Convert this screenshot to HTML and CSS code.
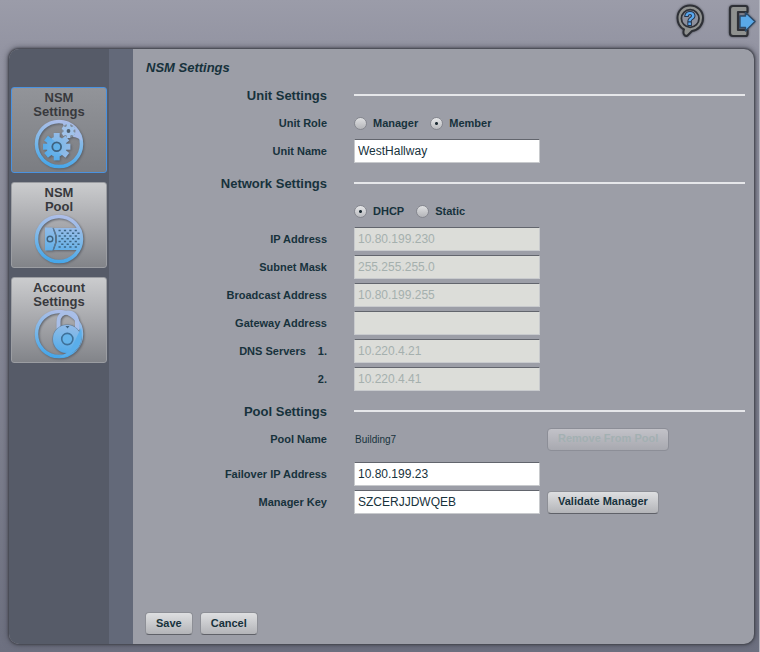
FILE: index.html
```html
<!DOCTYPE html>
<html lang="en">
<head>
<meta charset="utf-8">
<title>NSM Settings</title>
<link rel="stylesheet" href="styles.css">
</head>
<body>
<header class="topbar">
  <button class="icon-button" type="button" aria-label="Help">
    <svg width="32" height="36" viewBox="0 0 32 36">
      <path d="M16 2.500C8.800 2.500 3.500 8 3.500 15c0 5.500 2.800 9.500 6.500 11.500-1.500 4 .5 7.500 3.500 6l4.500-4.500C24.500 27 29 22 29 15 29 8 23.500 2.500 16 2.500z" fill="#8f918f" stroke="#2e3036" stroke-width="2" stroke-linejoin="round"/>
      <circle cx="16.200" cy="15.500" r="8.800" fill="#8d909c" stroke="#2e3036" stroke-width="1.800"/>
      <text class="help-mark" x="16" y="22" text-anchor="middle">?</text>
    </svg>
  </button>
  <button class="icon-button" type="button" aria-label="Log out">
    <svg width="32" height="36" viewBox="0 2 32 36">
      <path d="M7 5h12.500a2 2 0 0 1 2 2v4H12v18h9.500v4a2 2 0 0 1-2 2H7a3 3 0 0 1-3-3V8a3 3 0 0 1 3-3z" fill="#8f918f" stroke="#2e3036" stroke-width="2.200" stroke-linejoin="round"/>
      <path d="M14 15h5.500v-3.500l9.500 9-9.500 9.500V26.500H14z" fill="#5aa9e8" stroke="#2d4a68" stroke-width="1.400" stroke-linejoin="round"/>
    </svg>
  </button>
</header>

<div class="panel">
  <nav class="sidebar">
    <button class="tile tile-active" type="button">
      <span>NSM<br>Settings</span>
      <svg class="tile-icon" viewBox="0 0 50 50">
        <defs>
          <linearGradient id="blue" gradientUnits="userSpaceOnUse" x1="30" y1="0" x2="22" y2="50">
            <stop offset="0" stop-color="#b3bfe8"/>
            <stop offset=".5" stop-color="#7db8e8"/>
            <stop offset="1" stop-color="#42a5ea"/>
          </linearGradient>
        </defs>
        <circle cx="25" cy="25" r="22.500" fill="none" stroke="url(#blue)" stroke-width="3.500"/>
        <path d="M28 2A23.500 23.500 0 0 1 48.500 22q-6-4-9-4L30 8z" fill="#a6bce8"/>
        <circle cx="34.500" cy="12" r="7" fill="#808c9c"/>
        <g fill="#a0c2ea">
          <circle cx="34.500" cy="12" r="5"/>
          <path d="M32.800 5h3.400v14h-3.400z"/>
          <path d="M32.800 5h3.400v14h-3.400z" transform="rotate(60 34.500 12)"/>
          <path d="M32.800 5h3.400v14h-3.400z" transform="rotate(120 34.500 12)"/>
        </g>
        <circle cx="34.500" cy="12" r="1.900" fill="#50606f"/>
        <g fill="url(#blue)">
          <circle cx="22.700" cy="27.700" r="10"/>
          <path d="M19.700 14h6v27.400h-6z"/>
          <path d="M19.700 14h6v27.400h-6z" transform="rotate(51 22.700 27.700)"/>
          <path d="M19.700 14h6v27.400h-6z" transform="rotate(90 22.700 27.700)"/>
          <path d="M19.700 14h6v27.400h-6z" transform="rotate(129 22.700 27.700)"/>
        </g>
        <circle cx="22.700" cy="27.700" r="4.400" fill="#62b1e8" stroke="#3f627f" stroke-width="1.800"/>
      </svg>
    </button>
    <button class="tile" type="button">
      <span>NSM<br>Pool</span>
      <svg class="tile-icon" viewBox="0 0 50 50">
        <circle cx="25" cy="25" r="22.500" fill="none" stroke="url(#blue)" stroke-width="3.500"/>
        <path d="M11 13.500h7.500l2.500 8v7l-2.500 8H11z" fill="url(#blue)"/>
        <path d="M20 14h24.500q4 11 0 22H20l3-8v-6z" fill="url(#blue)"/>
        <path d="M19 14l3 8v6l-3 8.500" fill="none" stroke="#4d7ba0"/>
        <g fill="none" stroke="#3c6584" stroke-width="1.600">
          <path d="M24.500 16.500H45M24.500 22H45M24.500 27.500H45M24.500 33H45" stroke-dasharray="2.200 3.200"/>
          <path d="M27.200 19.250H46M27.200 24.750H46M27.200 30.250H46" stroke-dasharray="2.200 3.200"/>
        </g>
        <circle cx="16" cy="25" r="2.800" fill="#7fb9e8" stroke="#3f627f" stroke-width="1.400"/>
      </svg>
    </button>
    <button class="tile" type="button">
      <span>Account<br>Settings</span>
      <svg class="tile-icon" viewBox="0 0 50 50">
        <circle cx="25" cy="25" r="22.500" fill="none" stroke="url(#blue)" stroke-width="3.500"/>
        <path d="M24.500 20v-7c0-6 4-9.500 9.500-9.500s9 4 9 9.500v8" fill="none" stroke="#a9bfe8" stroke-width="4"/>
        <circle cx="33" cy="30" r="14.600" fill="#64809c"/>
        <circle cx="33" cy="30" r="14" fill="url(#blue)"/>
        <path d="M47 19A23.500 23.500 0 0 1 25 48.500L36 42z" fill="#5aaeea"/>
        <circle cx="33.300" cy="30" r="5.600" fill="#66b4ea" stroke="#3f7199" stroke-width="1.600"/>
        <path d="M31.500 17h4L33.500 19.500z" fill="#3f627f"/>
      </svg>
    </button>
  </nav>

  <form class="content">
    <h1>NSM Settings</h1>

    <section>
      <div class="row">
        <h2>Unit Settings</h2>
        <hr>
      </div>
      <div class="row" role="radiogroup" aria-labelledby="role">
        <span class="label" id="role">Unit Role</span>
        <div class="choices">
          <label><input type="radio" name="role">Manager</label>
          <label><input type="radio" name="role" checked>Member</label>
        </div>
      </div>
      <div class="row">
        <label class="label" for="unit">Unit Name</label>
        <input class="field" id="unit" type="text" value="WestHallway">
      </div>
    </section>

    <section>
      <div class="row">
        <h2>Network Settings</h2>
        <hr>
      </div>
      <div class="row">
        <div class="choices">
          <label><input type="radio" name="mode" checked>DHCP</label>
          <label><input type="radio" name="mode">Static</label>
        </div>
      </div>
      <div class="row">
        <label class="label" for="ip">IP Address</label>
        <input class="field" id="ip" type="text" value="10.80.199.230" disabled>
      </div>
      <div class="row">
        <label class="label" for="mask">Subnet Mask</label>
        <input class="field" id="mask" type="text" value="255.255.255.0" disabled>
      </div>
      <div class="row">
        <label class="label" for="broadcast">Broadcast Address</label>
        <input class="field" id="broadcast" type="text" value="10.80.199.255" disabled>
      </div>
      <div class="row">
        <label class="label" for="gateway">Gateway Address</label>
        <input class="field" id="gateway" type="text" disabled>
      </div>
      <div class="row">
        <label class="label label-numbered" for="dns1"><span>DNS Servers</span><span>1.</span></label>
        <input class="field" id="dns1" type="text" value="10.220.4.21" disabled>
      </div>
      <div class="row">
        <label class="label" for="dns2">2.</label>
        <input class="field" id="dns2" type="text" value="10.220.4.41" disabled>
      </div>
    </section>

    <section>
      <div class="row">
        <h2>Pool Settings</h2>
        <hr>
      </div>
      <div class="row row-pool">
        <span class="label">Pool Name</span>
        <output class="value">Building7</output>
        <button class="button" type="button" disabled>Remove From Pool</button>
      </div>
      <div class="row">
        <label class="label" for="failover">Failover IP Address</label>
        <input class="field" id="failover" type="text" value="10.80.199.23">
      </div>
      <div class="row">
        <label class="label" for="key">Manager Key</label>
        <input class="field" id="key" type="text" value="SZCERJJDWQEB">
        <button class="button" type="button">Validate Manager</button>
      </div>
    </section>

    <footer class="actions">
      <button class="button" type="submit">Save</button>
      <button class="button" type="button">Cancel</button>
    </footer>
  </form>
</div>
</body>
</html>
```

FILE: styles.css
```css
* {
  box-sizing: border-box;
}

body {
  display: flex;
  flex-direction: column;
  min-height: 100vh;
  margin: 0;
  padding: 0 5px 8px 9px;
  background: linear-gradient(#9b9ca9, #9394a2 50px, #858795 50%, #6d7080);
  border-right: 1px solid #b4b6c0;
  font-family: "Liberation Sans", Arial, sans-serif;
  font-size: 11px;
  color: #17323c;
}

button,
input {
  font-family: inherit;
  color: inherit;
}

.topbar {
  display: flex;
  justify-content: flex-end;
  gap: 20px;
  margin-right: -4px;
  padding: 3px 0 10px;
}

.icon-button {
  padding: 0;
  border: 0;
  background: none;
}

.icon-button svg {
  display: block;
  filter: drop-shadow(0 0 1px #4a4c56);
}

.help-mark {
  font-size: 18px;
  font-weight: bold;
  fill: #5aa9f0;
  stroke: #24344c;
  stroke-width: 2px;
  paint-order: stroke;
}

.panel {
  display: flex;
  flex: 1;
  overflow: hidden;
  border-radius: 10px;
  background: #9c9ea7;
  box-shadow: 0 0 2px 1px #44464f, 0 0 6px 1px #50525e;
}

.sidebar {
  display: flex;
  flex-direction: column;
  gap: 9px;
  flex: none;
  width: 124px;
  padding: 38px 2px 0;
  background: #565b68;
  border-right: 24px solid #636979;
}

.tile {
  display: flex;
  flex-direction: column;
  align-items: center;
  padding: 3px 0;
  border: 1px solid #9b9da2;
  border-radius: 3px;
  background: linear-gradient(#cbccce, #a7a8ac 50%, #828489);
  font-size: 13px;
  font-weight: bold;
  line-height: 14px;
  color: #38393d;
}

.tile-active {
  border-color: #4a92e0;
  background: linear-gradient(#929499, #87898e 50%, #7b7d82);
}

.tile-icon {
  width: 50px;
  height: 50px;
  filter: drop-shadow(1px 1px 1px #5c6068);
}

.content {
  display: flex;
  flex: 1;
  flex-direction: column;
  padding: 10px 9px 9px 12px;
}

h1,
h2 {
  margin: 0;
  font-size: 13px;
}

h1 {
  margin: 0 0 4px 1px;
  font-style: italic;
  line-height: 18px;
}

h2 {
  text-align: right;
}

section {
  margin-bottom: 4px;
}

.row {
  display: grid;
  grid-template-columns: 182px 186px 1fr;
  column-gap: 27px;
  align-items: center;
  height: 28px;
}

.row-pool {
  margin-bottom: 7px;
}

.row hr {
  grid-column: 2 / 4;
  width: 100%;
  height: 2px;
  margin: 0;
  border: 0;
  background: #e6e7ea;
}

.label {
  text-align: right;
  font-weight: bold;
}

.label-numbered {
  display: flex;
  justify-content: flex-end;
  gap: 12px;
}

.choices {
  display: flex;
  grid-column: 2;
  gap: 12px;
}

.choices label {
  display: flex;
  align-items: center;
  gap: 6px;
  font-weight: bold;
}

.choices input {
  appearance: none;
  width: 13px;
  height: 13px;
  margin: 0;
  border: 1px solid #85878f;
  border-radius: 50%;
  background: linear-gradient(#dfe0e2, #b4b5b9);
}

.choices input:checked {
  background: radial-gradient(circle, #1c2b33 1px, transparent 2px), linear-gradient(#e6e7e9, #b9babe);
}

.field {
  width: 100%;
  height: 24px;
  padding: 0 3px;
  border: 1px solid #c8cacd;
  border-top-color: #62656d;
  background: #fff;
  font-size: 12px;
}

.field:disabled {
  background: #dcddd9;
  color: #a5b0ae;
}

.value {
  padding-left: 1px;
  font-size: 10px;
}

.button {
  justify-self: start;
  height: 23px;
  padding: 0 10px 2px;
  border: 1px solid #8d8f96;
  border-bottom-color: #5f6168;
  border-radius: 4px;
  background: linear-gradient(#dedfe1, #b3b4b8);
  font-size: 11px;
  font-weight: bold;
}

.row .button {
  margin-left: -20px;
}

.button:disabled {
  border-color: #8c8e97;
  background: linear-gradient(#c2c2c8, #a8a9b0);
  color: #a3b0b2;
}

.actions {
  display: flex;
  gap: 7px;
  margin-top: auto;
}
```
